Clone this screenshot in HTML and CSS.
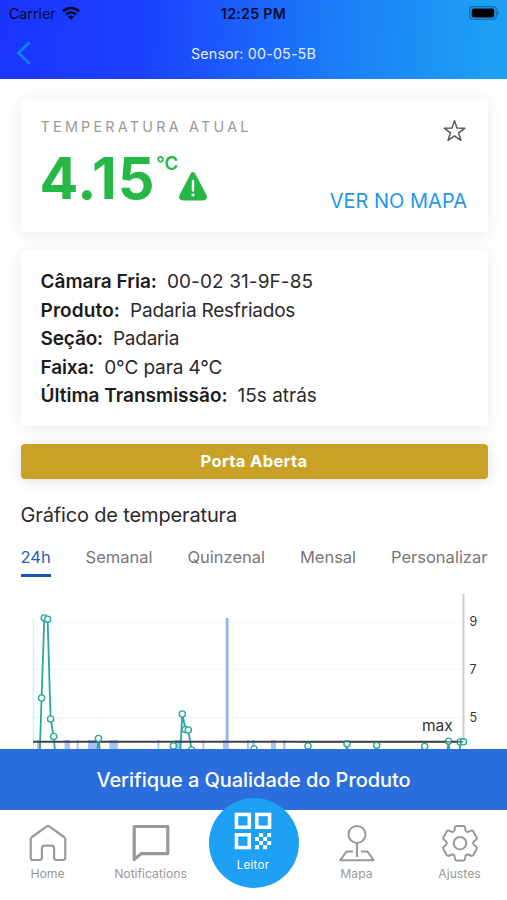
FILE: index.html
```html
<!DOCTYPE html>
<html lang="pt-BR">
<head>
<meta charset="utf-8">
<meta name="viewport" content="width=device-width, initial-scale=1">
<title>Sensor</title>
<link rel="stylesheet" href="styles.css">
</head>
<body>
<header class="header">
  <div class="status">
    <div class="carrier"><span>Carrier</span>
      <svg class="wifi" width="18" height="14" viewBox="0 0 18 14"><g fill="none" stroke="#060a2c" stroke-width="2.6"><path d="M1 5.2C5.5.9 12.500.9 17 5.200"/><path d="M4 8.500c2.900-2.600 7.100-2.600 10 0"/></g><path d="M9 13.700 5.800 10.500c1.800-1.500 4.600-1.500 6.400 0z" fill="#060a2c"/></svg>
    </div>
    <div class="clock">12:25 PM</div>
    <div class="battery-wrap"><svg width="31" height="14" viewBox="0 0 31 14"><rect x=".7" y=".7" width="26.600" height="12.600" rx="3.500" fill="none" stroke="#0f6aae" stroke-width="1.200"/><rect x="2.700" y="2.500" width="22.600" height="9" rx="2" fill="#000"/><path d="M28.500 4.700c2 .7 2 3.900 0 4.600z" fill="#0f6aae"/></svg></div>
  </div>
  <div class="titlebar">
    <svg class="back" width="16" height="24" viewBox="0 0 16 24"><path d="M13.500 1.500 2.500 12l11 10.500" fill="none" stroke="#0b84f5" stroke-width="2.600"/></svg>
    <h1>Sensor: 00-05-5B</h1>
    <span></span>
  </div>
</header>

<main class="content">
  <section class="card temp">
    <div class="temp-left">
      <div class="label">TEMPERATURA ATUAL</div>
      <div class="reading">
        <span class="value">4.15</span><span class="unit">°C</span>
        <svg class="warn" width="30" height="30" viewBox="0 0 30 30"><path d="M15 3.600 26.300 25.200q.8 1.700-1.100 1.700H4.800q-1.900 0-1.100-1.700z" fill="#26b845" stroke="#26b845" stroke-width="5" stroke-linejoin="round"/><path d="M15 10v9.500" stroke="#fff" stroke-width="2.400" stroke-linecap="round"/><circle cx="15" cy="24" r="1.600" fill="#fff"/></svg>
      </div>
    </div>
    <div class="temp-right">
      <svg class="star" width="25" height="25" viewBox="0 0 26 26"><path d="M13 2.800 15.600 10.500 23.800 10.600 17.200 15.400 19.700 23.200 13 18.500 6.300 23.200 8.800 15.400 2.200 10.600 10.400 10.500Z" fill="none" stroke="#555" stroke-width="1.500" stroke-linejoin="round"/></svg>
      <a class="map-link">VER NO MAPA</a>
    </div>
  </section>

  <section class="card details">
    <p><b>Câmara Fria:</b><span class="room">00-02 31-9F-85</span></p>
    <p><b class="product-key">Produto:</b><span class="product">Padaria Resfriados</span></p>
    <p><b class="section-key">Seção:</b><span class="section">Padaria</span></p>
    <p><b class="range-key">Faixa:</b><span class="range">0°C para 4°C</span></p>
    <p><b>Última Transmissão:</b><span>15s atrás</span></p>
  </section>

  <div class="door">Porta Aberta</div>

  <h2>Gráfico de temperatura</h2>
  <nav class="tabs"><span class="tab active">24h</span><span class="tab">Semanal</span><span class="tab">Quinzenal</span><span class="tab">Mensal</span><span class="tab">Personalizar</span></nav>

  <svg class="chart" width="507" height="170" viewBox="0 590 507 170">
    <g stroke="#f4f8f8" stroke-width="1.200"><path d="M33 622.500H463M33 669.500H463M33 717.700H463"/></g>
    <path d="M33.300 618V760" stroke="#c4f3f3" stroke-width="1.200"/>
    <path d="M463.500 594V745" stroke="#ccc" stroke-width="2"/>
    <g fill="#8db4fa">
      <rect x="225.700" y="618" width="2.800" height="142"/>
      <g fill="#a5c2fb">
        <rect x="37" y="740" width="4" height="20"/><rect x="64.500" y="740" width="5.500" height="20"/><rect x="76.700" y="740" width="2" height="20"/><rect x="88" y="740" width="9" height="20"/><rect x="109.300" y="740" width="8.500" height="20"/><rect x="157.500" y="740" width="1.800" height="20"/><rect x="175" y="740" width="5" height="20"/><rect x="202.500" y="740" width="1.800" height="20"/><rect x="223" y="740" width="5.500" height="20"/><rect x="247" y="740" width="2" height="20"/><rect x="252" y="740" width="3" height="20"/><rect x="271" y="740" width="5" height="20"/><rect x="283" y="740" width="2.500" height="20"/>
      </g>
    </g>
    <g fill="none" stroke="#2aa89c" stroke-width="1.800">
      <path d="M39.500 760 41.600 698 44.300 618 47.600 619 50.600 719 53.700 736.500 55.800 760"/>
      <path d="M96.500 760 98.500 738.500 101 760"/>
      <path d="M179.800 760 182.300 714 185.500 729.500 188.200 730 191.500 749 195 760"/>
      <path d="M345 760 347 744 349 760M446.500 760 448.500 741 450.500 760M458.500 760 460.500 742"/>
    </g>
    <path d="M33 741.800H463" stroke="#3f4142" stroke-width="1.900"/>
    <g fill="#fff" stroke="#2aa89c" stroke-width="1.400">
      <circle cx="41.600" cy="698" r="3.100"/><circle cx="44.300" cy="618" r="3.100"/><circle cx="47.600" cy="619.200" r="3.100"/><circle cx="50.600" cy="719" r="3.100"/><circle cx="53.700" cy="736.500" r="3.100"/>
      <circle cx="98.500" cy="738.500" r="3.100"/><circle cx="173.300" cy="746" r="3.100"/><circle cx="182.300" cy="714" r="3.100"/><circle cx="185.200" cy="729.500" r="3.100"/><circle cx="188.300" cy="730" r="3.100"/><circle cx="191.500" cy="750" r="3.100"/>
      <circle cx="254" cy="749" r="3.100"/><circle cx="308" cy="746" r="3.100"/><circle cx="347" cy="743.800" r="3.100"/><circle cx="376.700" cy="745.300" r="3.100"/><circle cx="424.700" cy="746.500" r="3.100"/><circle cx="448.600" cy="741.200" r="3.100"/><circle cx="460.300" cy="742" r="3.100"/><circle cx="463.500" cy="741.800" r="3.100"/>
    </g>
    <path d="M300 741.800H463" stroke="#3f4142" stroke-width="1.500" opacity=".7"/>
    <g class="ticks"><text x="469.500" y="626">9</text><text x="469.500" y="674">7</text><text x="469.500" y="721.500">5</text></g>
    <text class="max" x="422" y="730.500">max</text>
  </svg>
</main>

<button class="cta">Verifique a Qualidade do Produto</button>
<footer class="tabbar">
  <div class="item"><svg width="40" height="40" viewBox="0 0 40 40"><path d="M20 2.900Q20.600 2.900 21.200 3.400L36 14q1.300 1 1.300 2.500V34.500q0 2.500-2.500 2.500H28.500q-2.400 0-2.400-2.400V25.500q0-2.800-2.800-2.800H16.700q-2.800 0-2.800 2.800v9.100q0 2.400-2.400 2.400H5.200q-2.500 0-2.500-2.500V16.500Q2.700 15 4 14L18.800 3.400q.6-.5 1.200-.5Z" fill="none" stroke="#9a9a9a" stroke-width="2.200"/></svg><span>Home</span></div>
  <div class="item"><svg width="40" height="40" viewBox="0 0 40 40"><path d="M3.200 3.500H36.800V30.600H10.200L3.200 36.500Z" fill="none" stroke="#999" stroke-width="3.200" stroke-linejoin="round"/></svg><span>Notifications</span></div>
  <div class="item reader-slot"><div class="reader">
    <svg width="38" height="38" viewBox="0 0 38 38"><g fill="none" stroke="#fff" stroke-width="3.500"><rect x="2.450" y="2.450" width="12.800" height="12.800"/><rect x="22.750" y="2.450" width="12.800" height="12.800"/><rect x="2.450" y="22.750" width="12.800" height="12.800"/></g><path fill="#fff" d="M25 21h4v4h-4zM33.200 21h4v4h-4zM21 25h4v4h-4zM29.100 25h4v4h-4zM25 29.100h4v4h-4zM33.200 29.100h4v4h-4zM21 33.200h4v4h-4zM29.100 33.200h4v4h-4z"/></svg>
    <span class="leitor">Leitor</span></div></div>
  <div class="item"><svg width="40" height="40" viewBox="0 0 40 40"><g fill="none" stroke="#999" stroke-width="2"><circle cx="20" cy="11.400" r="8.500"/><path d="M20 20v14.200" stroke-width="2.200"/><path d="M16 28.500H9.500L3.200 37.300H36.800L30.500 28.500H24" stroke-linejoin="round"/></g></svg><span>Mapa</span></div>
  <div class="item"><svg width="40" height="40" viewBox="0 0 40 40"><g fill="none" stroke="#999" stroke-width="2" stroke-linejoin="round"><circle cx="20" cy="20.200" r="6.300"/><path d="M16.500 2.900H23.500Q24.800 2.900 25 4.200L25.500 7.300Q26 9.300 28 8.900L31 7.600Q32.400 7.100 33.200 8.400L36.700 14.400Q37.400 15.600 36.300 16.500L33.800 18.500Q32.500 20 33.800 21.700L36.300 23.800Q37.400 24.700 36.700 25.900L33.200 31.900Q32.400 33.200 31 32.700L28 31.500Q26 31.100 25.500 33.100L25 36.100Q24.800 37.400 23.500 37.400H16.500Q15.200 37.400 15 36.100L14.500 33.100Q14 31.100 12 31.500L9 32.700Q7.600 33.200 6.800 31.900L3.300 25.900Q2.600 24.700 3.700 23.800L6.200 21.700Q7.500 20 6.200 18.500L3.700 16.500Q2.600 15.600 3.300 14.400L6.800 8.400Q7.600 7.100 9 7.600L12 8.900Q14 9.300 14.500 7.300L15 4.200Q15.200 2.900 16.500 2.900Z"/></g></svg><span>Ajustes</span></div>
</footer>
</body>
</html>
```
FILE: styles.css
```css
* { box-sizing: border-box; }
body {
  margin: 0;
  width: 507px;
  height: 900px;
  overflow: hidden;
  display: flex;
  flex-direction: column;
  background: #fff;
  color: #2a2a2a;
  font-family: Inter, "Liberation Sans", sans-serif;
}
h1, h2, p { margin: 0; font-weight: 400; }
svg { display: block; flex: none; }
span, b, a, h1, h2 { white-space: nowrap; }

.header {
  height: 79px;
  flex: none;
  background: linear-gradient(93deg, #1b35ff 0%, #1c40fd 28%, #1b63fb 50%, #1b80f8 68%, #1d9ff3 96%);
}
.status {
  height: 28px;
  padding: 0 7px 1px 9px;
  display: grid;
  grid-template-columns: 1fr auto 1fr;
  align-items: center;
  color: #060a2c;
  font-size: 14.2px;
}
.carrier { display: flex; align-items: center; gap: 6px; }
.wifi { margin-top: -2px; }
.clock { font-weight: 600; letter-spacing: .3px; margin-left: -2px; }
.battery-wrap { justify-self: end; margin-top: -1px; }
.titlebar {
  height: 51px;
  padding: 0 16px;
  display: grid;
  grid-template-columns: 1fr auto 1fr;
  align-items: center;
  color: #e8eeff;
}
.back { margin-top: -2px; }
h1 { font-size: 14.3px; letter-spacing: .15px; }

.content {
  height: 670px;
  flex: none;
  padding: 20px 19.500px 0 20.5px;
  overflow: hidden;
}
.card {
  border-radius: 4px;
  background: #fff;
  box-shadow: 0 2px 16px rgba(0, 0, 0, .09);
}
.temp {
  height: 133px;
  padding: 19px 20.500px 0 20px;
  display: flex;
  justify-content: space-between;
}
.label { font-size: 14.3px; line-height: 18px; letter-spacing: 3.28px; color: #999; }
.reading { display: flex; color: #26b845; margin-top: 7px; }
.value { font-size: 57.500px; line-height: 70px; font-weight: 700; letter-spacing: .8px; margin-left: -1px; }
.unit { font-size: 18.5px; line-height: 24px; font-weight: 600; margin: 8px 0 0 1px; }
.warn { margin: 27.500px 0 0 0; }
.temp-right { display: flex; flex-direction: column; align-items: flex-end; }
.map-link { margin-top: 45px; font-size: 20px; line-height: 26px; color: #2598ea; }
.details {
  height: 176px;
  margin-top: 18px;
  padding: 18px 20px;
  font-size: 19px;
  line-height: 28.5px;
}
.details p { display: flex; gap: 10px; }
.details b { font-weight: 600; color: #1c1c1c; }
.room { letter-spacing: .1px; }
.product-key { letter-spacing: .12px; }
.product { letter-spacing: -.22px; }
.section-key { letter-spacing: -.15px; }
.section { letter-spacing: -.25px; }
.range-key { letter-spacing: -.12px; }
.range { letter-spacing: -.12px; }
.door {
  height: 35px;
  margin-top: 17px;
  border-radius: 4px;
  background: #c8a227;
  box-shadow: 0 2px 14px rgba(0, 0, 0, .12);
  color: #fff;
  font-size: 16.5px;
  letter-spacing: .35px;
  line-height: 35px;
  font-weight: 700;
  text-align: center;
}
.details + .door { margin-top: 18px; }
h2 { margin-top: 23px; font-size: 20px; line-height: 26px; letter-spacing: -.15px; }
.tabs { height: 33px; margin-top: 16px; display: flex; justify-content: space-between; }
.tab { height: 33px; line-height: 27px; font-size: 16.5px; color: #777; }
.active { color: #1c5fc0; border-bottom: 3px solid #1556b8; }
.chart { margin: 13px -19.500px 0 -20.500px; }
.ticks text { font-size: 12.500px; fill: #333; }
.max { font-size: 15.500px; fill: #333; }

.cta {
  height: 61px;
  flex: none;
  padding: 0;
  border: 0;
  background: #2b6edb;
  color: #fff;
  font: 500 20px Inter, "Liberation Sans", sans-serif;
  letter-spacing: -.05px;
}
.tabbar {
  height: 90px;
  flex: none;
  display: grid;
  grid-template-columns: repeat(5, 103px);
  justify-content: center;
  background: #fff;
}
.item {
  padding-top: 13px;
  display: flex;
  flex-direction: column;
  align-items: center;
  color: #999;
  font-size: 12.200px;
  line-height: 16px;
}
.item > span { margin-top: 3px; }
.reader-slot { padding: 0; }
.reader {
  width: 90px;
  height: 90px;
  margin-top: -12px;
  padding: 14px 1px 0 0;
  flex: none;
  border-radius: 50%;
  display: flex;
  flex-direction: column;
  align-items: center;
  background: #1ea1f5;
  color: #fff;
  font-size: 11.500px;
  letter-spacing: .3px;
}
.leitor { margin-top: 7px; }
```
